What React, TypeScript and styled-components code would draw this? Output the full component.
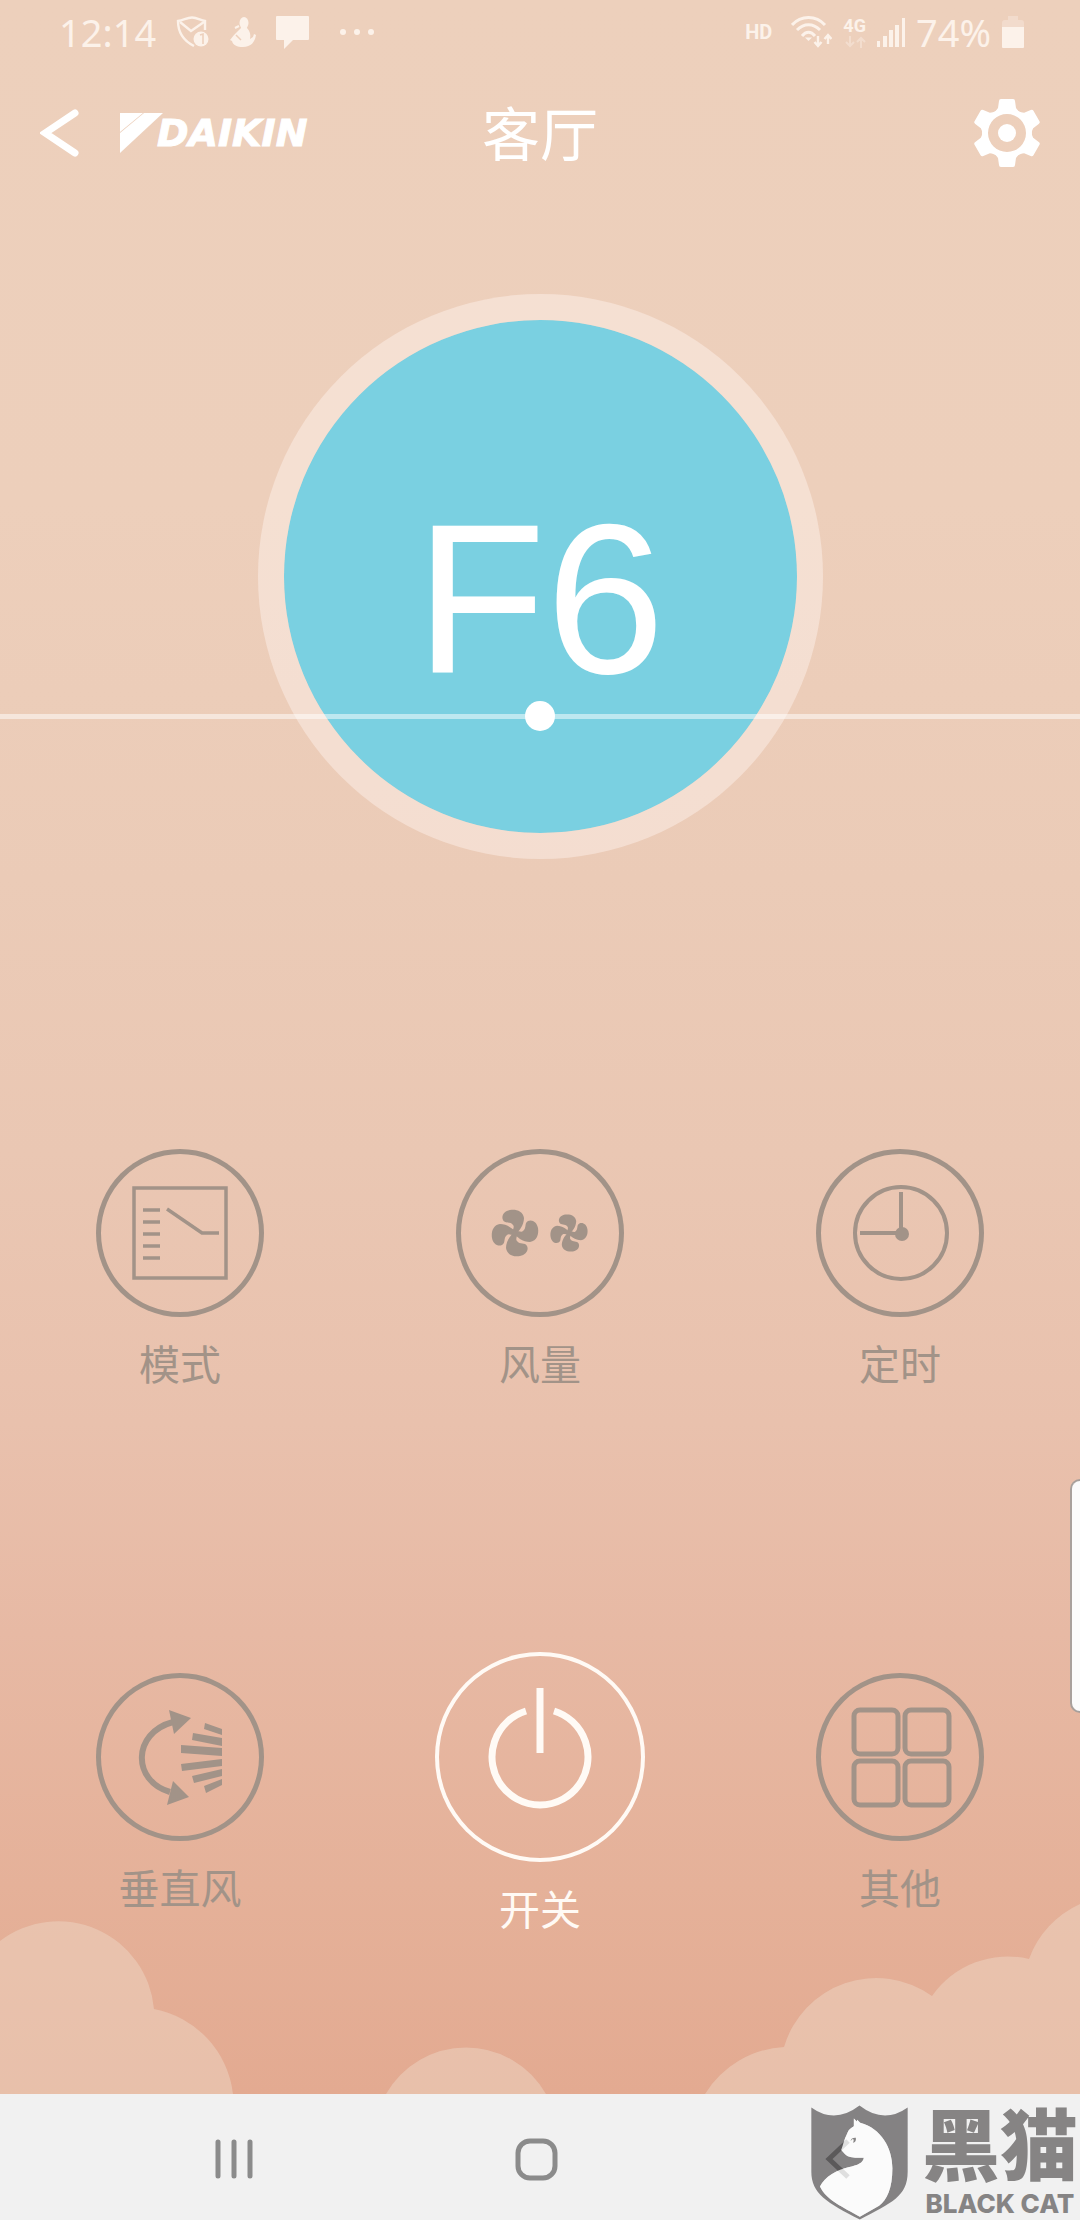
import React from "react";
import styled, { createGlobalStyle } from "styled-components";

const INK = "#a29388";
const LIGHT = "#fcf2ea";

const GlobalStyle = createGlobalStyle`
  * { box-sizing: border-box; }
  body {
    margin: 0;
    font-family: "Noto Sans", "Noto Sans CJK SC", sans-serif;
  }
  button {
    border: 0;
    padding: 0;
    background: none;
    font: inherit;
    color: inherit;
    cursor: pointer;
  }
  svg { display: block; }
`;

const Screen = styled.div`
  position: relative;
  min-height: 100vh;
  display: flex;
  flex-direction: column;
  overflow: hidden;
`;

const Sky = styled.div`
  position: relative;
  flex: 1;
  display: flex;
  flex-direction: column;
  background: linear-gradient(
    #edd0bc 0%,
    #edcfbb 24%,
    #ebcbb7 42%,
    #eac7b3 55%,
    #e9c1ad 68%,
    #e7b9a4 78%,
    #e5b199 90%,
    #e3aa91 100%
  );
`;

const StatusBar = styled.div`
  height: 64px;
  padding: 0 56px 0 59px;
  display: flex;
  align-items: center;
  justify-content: space-between;
  color: ${LIGHT};
`;

const StatusGroup = styled.div<{ $gap: number }>`
  display: flex;
  align-items: center;
  gap: ${(p) => p.$gap}px;
`;

const StatusText = styled.span`
  font-family: "Noto Sans", sans-serif;
  font-size: 38px;
  line-height: 48px;
`;

const More = styled.span`
  margin-left: 10px;
`;

const HdMark = styled.span`
  font-family: Roboto, sans-serif;
  font-size: 20px;
  font-weight: 700;
  line-height: 24px;
  margin-right: 8px;
`;

const NetworkMark = styled.span`
  display: flex;
  flex-direction: column;
  align-items: center;
  font-family: Roboto, sans-serif;
  font-size: 18px;
  font-weight: 700;
  line-height: 20px;
`;

const Header = styled.header`
  height: 138px;
  padding: 0 40px;
  display: grid;
  grid-template-columns: 1fr auto 1fr;
  align-items: center;
  color: #fff;
`;

const HeaderStart = styled.div`
  display: flex;
  align-items: center;
  gap: 40px;
`;

const Brand = styled.div`
  display: flex;
  align-items: flex-start;
  height: 40px;
`;

const BrandName = styled.span`
  margin-left: -6px;
  font-family: "DejaVu Sans", sans-serif;
  font-size: 38px;
  font-weight: 700;
  font-style: oblique;
  line-height: 40px;
  -webkit-text-stroke: 1px currentColor;
`;

const Title = styled.h1`
  margin: 0;
  padding-bottom: 4px;
  font-family: "Noto Sans CJK SC", sans-serif;
  font-size: 58px;
  font-weight: 400;
  line-height: 64px;
`;

const IconButton = styled.button<{ $end?: boolean }>`
  display: flex;
  justify-self: ${(p) => (p.$end ? "end" : "auto")};
`;

const DialArea = styled.section`
  position: relative;
  padding-top: 92px;
  display: flex;
  justify-content: center;
`;

const Dial = styled.div`
  width: 565px;
  height: 565px;
  border-radius: 50%;
  border: 26px solid rgba(255, 245, 240, 0.45);
  background: #7ad0e1;
  background-clip: padding-box;
  display: flex;
  align-items: center;
  justify-content: center;
  padding-top: 44px;
`;

const Reading = styled.span`
  color: #fff;
  font-family: "Liberation Sans", Arial, sans-serif;
  font-size: 214px;
  line-height: 240px;
`;

const Horizon = styled.div`
  position: absolute;
  left: 0;
  right: 0;
  bottom: 128px;
  height: 30px;
  display: flex;
  align-items: center;
  justify-content: center;
  &::before {
    content: "";
    position: absolute;
    left: 0;
    right: 0;
    height: 5px;
    background: rgba(255, 255, 255, 0.5);
  }
`;

const Knob = styled.span`
  position: relative;
  width: 30px;
  height: 30px;
  border-radius: 50%;
  background: #fff;
`;

const Controls = styled.section`
  position: relative;
  z-index: 1;
  padding: 290px 0 160px;
  display: grid;
  grid-template-columns: repeat(3, 1fr);
  row-gap: 266px;
  align-items: center;
  justify-items: center;
`;

const Control = styled.button<{ $active?: boolean }>`
  display: flex;
  flex-direction: column;
  align-items: center;
  gap: 21px;
  color: ${(p) => (p.$active ? "#fffaf5" : INK)};
`;

const Ring = styled.span<{ $active?: boolean }>`
  display: block;
  border-radius: 50%;
  box-shadow: inset 0 0 0 ${(p) => (p.$active ? 4 : 5)}px currentColor;
`;

const ControlLabel = styled.span`
  font-family: "Noto Sans CJK SC", sans-serif;
  font-size: 41px;
  font-weight: 400;
  line-height: 48px;
`;

const Clouds = styled.svg`
  position: absolute;
  left: 0;
  bottom: 0;
  width: 100%;
  height: auto;
`;

const EdgeHandle = styled.div`
  position: absolute;
  right: 0;
  top: 1479px;
  width: 10px;
  height: 234px;
  border: 2px solid #a8a09c;
  border-right: 0;
  border-radius: 12px 0 0 12px;
  background: #fbfbfb;
`;

const NavBar = styled.nav`
  height: 126px;
  padding: 0 91px 0 83px;
  display: grid;
  grid-template-columns: repeat(3, 1fr);
  align-items: center;
  justify-items: center;
  background: #f1f1f1;
  color: #8b8b8b;
`;

const Watermark = styled.div`
  position: absolute;
  right: 2px;
  bottom: 0;
  display: flex;
  align-items: flex-end;
  gap: 14px;
  color: #868484;
`;

const WatermarkText = styled.div`
  display: flex;
  flex-direction: column;
  align-items: center;
`;

const WatermarkName = styled.span`
  font-family: "Noto Sans CJK SC", sans-serif;
  font-size: 78px;
  font-weight: 900;
  line-height: 94px;
`;

const WatermarkLatin = styled.span`
  font-family: Inter, sans-serif;
  font-size: 26px;
  font-weight: 800;
  line-height: 32px;
  white-space: nowrap;
`;

const ShieldStatus = () => (
  <svg width="34" height="32" viewBox="0 0 34 32" fill="none" stroke="currentColor" strokeWidth="2.4">
    <path d="M18 30 C8 25 2 17 2 5 C8 4 11 1.500 16 1.500 C21 1.500 24 4 29 5 L29 14" />
    <path d="M4 6 L15 15 L28 6" />
    <circle cx="25" cy="23" r="7.500" fill="currentColor" stroke="none" />
    <path d="M24 19 L27 18 V28" stroke="#edd0bc" strokeWidth="1.600" />
  </svg>
);

const FigureStatus = () => (
  <svg width="26" height="31" viewBox="0 0 26 31" fill="currentColor">
    <ellipse cx="14" cy="6" rx="4.500" ry="6" />
    <path d="M11 11 L17 11 C20 14 21 18 20 22 L23 20 L24 17 L26 18 C25 25 21 30 13 30 C7 30 3 28 2 24 L0 23 L4 18 L7 15 Z" />
    <path d="M5 11 L9 9 M7 19 L12 24" stroke="currentColor" strokeWidth="2" />
    <path d="M6 18 L11 23" stroke="#edd0bc" strokeWidth="1.500" />
  </svg>
);

const ChatStatus = () => (
  <svg width="33" height="33" viewBox="0 0 33 33" fill="currentColor">
    <path d="M1 0 H32 Q33 0 33 1 V23 Q33 24 32 24 H17 L8 33 V24 H1 Q0 24 0 23 V1 Q0 0 1 0 Z" />
  </svg>
);

const MoreStatus = () => (
  <svg width="36" height="8" viewBox="0 0 36 8" fill="currentColor">
    <circle cx="4" cy="4" r="3" />
    <circle cx="18" cy="4" r="3" />
    <circle cx="32" cy="4" r="3" />
  </svg>
);

const WifiStatus = () => (
  <svg width="41" height="32" viewBox="0 0 41 32" fill="none" stroke="currentColor" strokeWidth="3">
    <path d="M1 9 C10 -1 25 -1 34 9" />
    <path d="M6 14 C13 7 22 7 29 14" />
    <path d="M11 20 C15 15 20 15 24 20" />
    <path d="M17.500 25 L14 21.500 H21 Z" fill="currentColor" stroke="none" />
    <path d="M27 20 V29 M23.500 26 L27 30 L30.500 26 M37 28 V20 M33.500 23 L37 19 L40.500 23" strokeWidth="2.400" />
  </svg>
);

const DataArrows = () => (
  <svg width="22" height="12" viewBox="0 0 22 12" fill="none" stroke="currentColor" strokeWidth="2" opacity="0.4">
    <path d="M6 0 V10 M2 6 L6 10 L10 6 M17 12 V2 M13 6 L17 2 L21 6" />
  </svg>
);

const SignalStatus = () => (
  <svg width="28" height="29" viewBox="0 0 28 29" fill="currentColor">
    <rect x="0" y="23" width="3" height="6" />
    <rect x="6" y="18" width="4" height="11" />
    <rect x="12" y="12" width="4" height="17" />
    <rect x="18" y="7" width="4" height="22" />
    <rect x="25" y="0" width="3" height="29" />
  </svg>
);

const BatteryStatus = () => (
  <svg width="22" height="32" viewBox="0 0 22 32" fill="currentColor">
    <path d="M6 0 H16 V4 H19 Q22 4 22 7 V11 H0 V7 Q0 4 3 4 H6 Z" opacity="0.35" />
    <path d="M0 11 H22 V31 Q22 32 21 32 H1 Q0 32 0 31 Z" />
  </svg>
);

const BackIcon = () => (
  <svg width="40" height="48" viewBox="0 0 40 48" fill="none" stroke="currentColor" strokeWidth="7" strokeLinecap="round">
    <path d="M35 4 L5 24 L35 44" />
  </svg>
);

const BrandMark = () => (
  <svg width="43" height="40" viewBox="0 0 43 40" fill="currentColor">
    <path d="M0 0 H23 L0 19 Z" />
    <path d="M24 0 H43 L0 40 V20 Z" />
  </svg>
);

const GearIcon = () => (
  <svg width="66" height="68" viewBox="-33 -34 66 68" fill="currentColor">
    <path
      fillRule="evenodd"
      d="M0 -25 A25 25 0 1 1 0 25 A25 25 0 1 1 0 -25 Z M0 -19 A19 19 0 1 0 0 19 A19 19 0 1 0 0 -19 Z"
    />
    {[0, 60, 120, 180, 240, 300].map((a) => (
      <path key={a} transform={`rotate(${a})`} d="M-12 -21 L-9 -25 L-8 -32 Q-8 -34 -6 -34 H6 Q8 -34 8 -32 L9 -25 L12 -21 L7 -22 H-7 Z" />
    ))}
    <circle r="9" />
  </svg>
);

const ModeIcon = () => (
  <svg width="168" height="168" fill="none" stroke="currentColor" strokeWidth="3.500">
    <rect x="38" y="39" width="92" height="90" />
    <path d="M47 61 H64 M47 73 H64 M47 85 H64 M47 97 H64 M47 109 H64 M71 60 L106 84 H123" />
  </svg>
);

const BLADE =
  "M-1 2 C4 -1 9 -8 9 -15 C8 -22 1 -24 -5 -23 C-11 -22 -14 -17 -12 -13 C-10 -9 -5 -12 -2 -8 C0 -6 -3 -3 -2 0 Z";

const Fan = ({ place }: { place: string }) => (
  <g transform={place}>
    {[0, 90, 180, 270].map((a) => (
      <path key={a} transform={`rotate(${a})`} d={BLADE} />
    ))}
  </g>
);

const FanIcon = () => (
  <svg width="168" height="168" fill="currentColor">
    <Fan place="translate(59 84)" />
    <Fan place="translate(113 84) scale(0.8)" />
  </svg>
);

const TimerIcon = () => (
  <svg width="168" height="168" fill="none" stroke="currentColor" strokeWidth="4">
    <circle cx="85" cy="84" r="46" />
    <path d="M85 43 V84 H44" />
    <circle cx="86" cy="85" r="7" fill="currentColor" stroke="none" />
  </svg>
);

const SwingIcon = () => (
  <svg width="168" height="168" fill="currentColor">
    <path d="M77 49 C36 60 36 108 74 119" fill="none" stroke="currentColor" strokeWidth="6" />
    <path d="M73 37 L95 45 L78 61 Z M77 108 L93 124 L71 132 Z" />
    <path d="M109 50 L126 56 V62 L108 56 Z M97 60 L126 65 V73 L96 67 Z M85 72 L126 75 V83 L85 80 Z" />
    <path d="M85 91 L126 86 V93 L86 98 Z M96 103 L126 96 V103 L98 110 Z M108 113 L126 106 V112 L110 120 Z" />
  </svg>
);

const PowerIcon = () => (
  <svg width="210" height="210" fill="none" stroke="currentColor" strokeWidth="7">
    <path d="M105 36 V101" />
    <path d="M91 59 A48 48 0 1 0 119 59" />
  </svg>
);

const TilesIcon = () => (
  <svg width="168" height="168" fill="none" stroke="currentColor" strokeWidth="5">
    <rect x="38" y="37" width="44" height="44" rx="6" />
    <rect x="89" y="37" width="44" height="44" rx="6" />
    <rect x="38" y="88" width="44" height="44" rx="6" />
    <rect x="89" y="88" width="44" height="44" rx="6" />
  </svg>
);

const CAT =
  "M222 115 L231 124 L232 119 L241 128 C305 145 338 205 338 265 C338 325 322 360 298 378 L240 411 C190 382 140 362 120 320 C135 290 170 270 205 262 C235 255 250 248 252 233 C235 232 208 237 195 222 L184 210 C190 195 192 178 202 160 C206 148 212 144 222 138 Z";

const CatShield = () => (
  <svg width="97" height="115" viewBox="93 75 292 345">
    <path
      fill="rgba(60, 57, 58, 0.6)"
      fillRule="evenodd"
      d={`M94 82 Q165 133 239 76 Q312 133 384 82 V275 C384 350 335 368 240 419 C140 368 94 340 94 275 Z ${CAT}`}
    />
    <path d={CAT} fill="rgba(255, 255, 255, 0.72)" />
    <path d="M212 183 Q214 172 228 173 Q230 186 219 188 Q224 180 219 176 Z" fill="#868484" />
  </svg>
);

type Item = { label: string; icon: React.ReactNode; active?: boolean };

const ITEMS: Item[] = [
  { label: "模式", icon: <ModeIcon /> },
  { label: "风量", icon: <FanIcon /> },
  { label: "定时", icon: <TimerIcon /> },
  { label: "垂直风", icon: <SwingIcon /> },
  { label: "开关", icon: <PowerIcon />, active: true },
  { label: "其他", icon: <TilesIcon /> },
];

export default function App() {
  return (
    <Screen>
      <GlobalStyle />
      <Sky>
        <StatusBar>
          <StatusGroup $gap={20}>
            <StatusText>12:14</StatusText>
            <ShieldStatus />
            <FigureStatus />
            <ChatStatus />
            <More>
              <MoreStatus />
            </More>
          </StatusGroup>
          <StatusGroup $gap={11}>
            <HdMark>HD</HdMark>
            <WifiStatus />
            <NetworkMark>
              4G
              <DataArrows />
            </NetworkMark>
            <SignalStatus />
            <StatusText>74%</StatusText>
            <BatteryStatus />
          </StatusGroup>
        </StatusBar>

        <Header>
          <HeaderStart>
            <IconButton aria-label="返回">
              <BackIcon />
            </IconButton>
            <Brand>
              <BrandMark />
              <BrandName>DAIKIN</BrandName>
            </Brand>
          </HeaderStart>
          <Title>客厅</Title>
          <IconButton $end aria-label="设置">
            <GearIcon />
          </IconButton>
        </Header>

        <DialArea>
          <Dial>
            <Reading>F6</Reading>
          </Dial>
          <Horizon>
            <Knob />
          </Horizon>
        </DialArea>

        <Controls>
          {ITEMS.map((item) => (
            <Control key={item.label} $active={item.active}>
              <Ring $active={item.active}>{item.icon}</Ring>
              <ControlLabel>{item.label}</ControlLabel>
            </Control>
          ))}
        </Controls>

        <Clouds viewBox="0 0 1080 194" fill="#edd5c4" fillOpacity="0.5" aria-hidden="true">
          <path d="M0 41 A96 96 0 0 1 154 109 A98 98 0 0 1 233 194 H0 Z" />
          <path d="M386 194 A92 92 0 0 1 546 194 Z" />
          <path d="M705 194 A99 99 0 0 1 784 147 A96 96 0 0 1 932 96 A92 92 0 0 1 1029 59 A97 97 0 0 1 1080 4 V194 Z" />
        </Clouds>
      </Sky>

      <EdgeHandle />

      <NavBar>
        <IconButton aria-label="最近任务">
          <svg width="120" height="60" viewBox="-60 -30 120 60" stroke="currentColor" strokeWidth="5" strokeLinecap="round">
            <path d="M-16 -15 V19 M0 -15 V19 M16 -15 V19" />
          </svg>
        </IconButton>
        <IconButton aria-label="主页">
          <svg width="120" height="60" viewBox="-60 -30 120 60" fill="none" stroke="currentColor" strokeWidth="5">
            <rect x="-18" y="-16" width="37" height="37" rx="12" />
          </svg>
        </IconButton>
        <IconButton aria-label="后退">
          <svg width="120" height="60" viewBox="-60 -30 120 60" fill="none" stroke="currentColor" strokeWidth="5">
            <path d="M10 -16 L-9 2 L10 20" />
          </svg>
        </IconButton>
      </NavBar>

      <Watermark>
        <CatShield />
        <WatermarkText>
          <WatermarkName>黑猫</WatermarkName>
          <WatermarkLatin>BLACK CAT</WatermarkLatin>
        </WatermarkText>
      </Watermark>
    </Screen>
  );
}
